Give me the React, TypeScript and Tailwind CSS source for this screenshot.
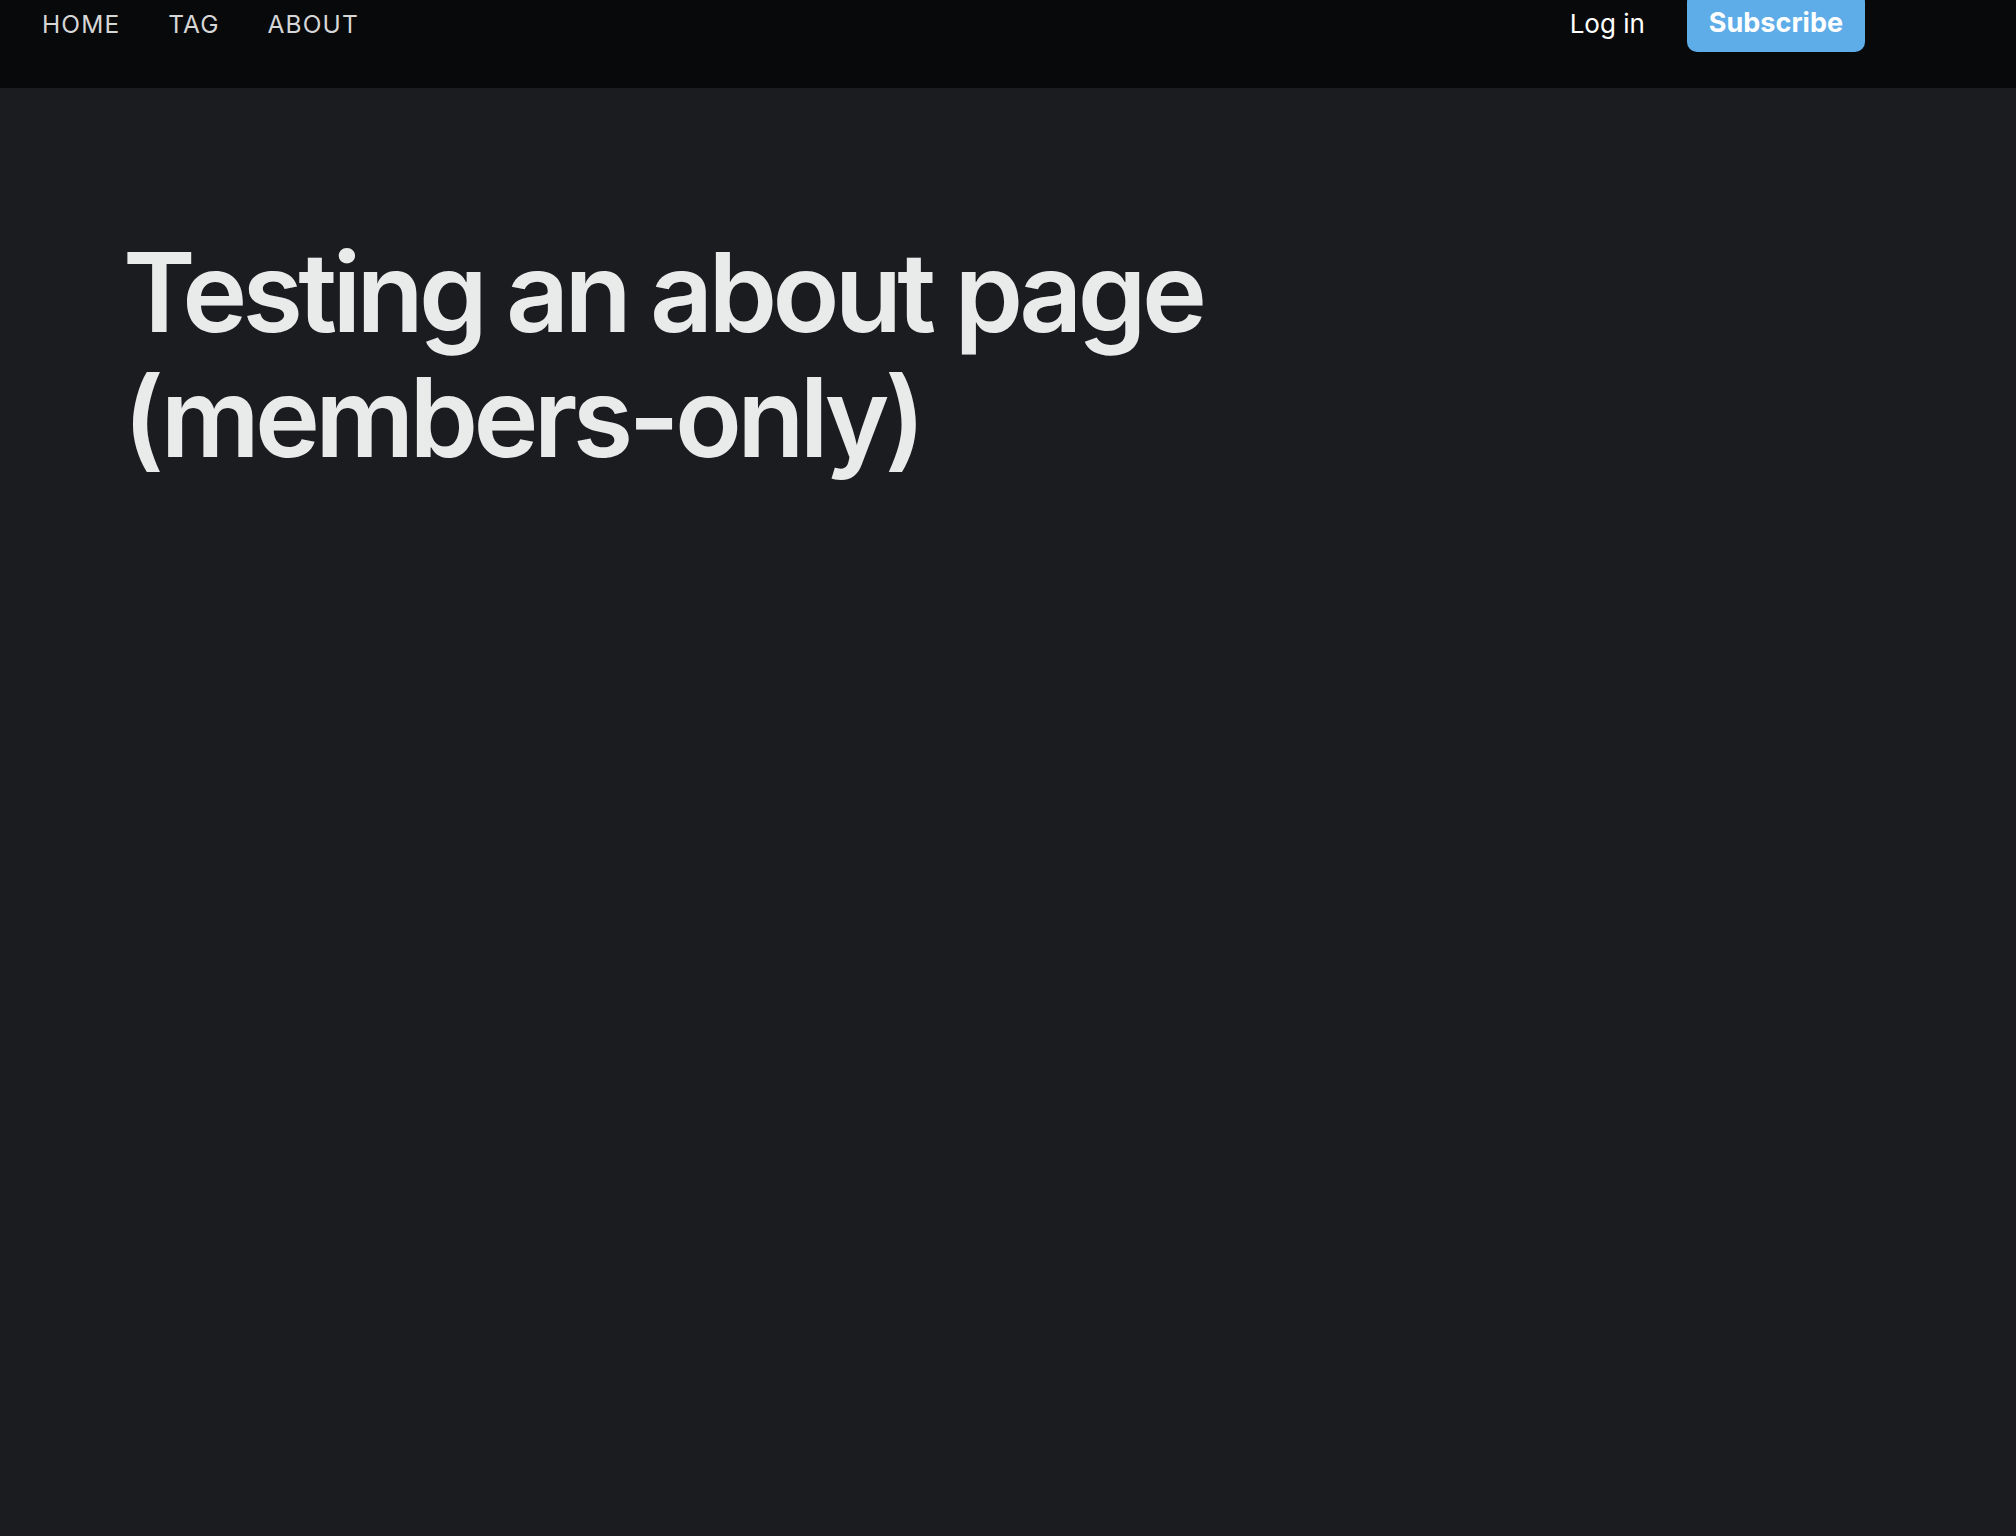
export default function App() {
    const font = { fontFamily: 'Inter, "Noto Sans", sans-serif' };

    return (
        <div className="min-h-screen w-full bg-[#1b1c20]" style={font}>
            <header className="flex h-[88px] w-full flex-col bg-[#08090b]">
                <div className="-mt-[8px] flex h-[60px] items-center justify-between pl-[42px] pr-[151px]">
                    <nav className="mt-[5px] flex items-center gap-[48px] text-[24.5px] uppercase tracking-[0.045em] text-[#d6d6d6]">
                        <a href="#">Home</a>
                        <a href="#">Tag</a>
                        <a href="#">About</a>
                    </nav>
                    <div className="flex items-center gap-[42px]">
                        <a href="#" className="mt-[3px] text-[26px] text-white">
                            Log in
                        </a>
                        <button className="h-[60px] rounded-[10px] bg-[#5eade8] px-[22px] pt-[3px] text-[27px] font-bold text-white">
                            Subscribe
                        </button>
                    </div>
                </div>
            </header>
            <main className="px-[123px] pt-[142px]">
                <h1 className="max-w-[1200px] text-[110px] font-semibold leading-[125px] tracking-[-0.043em] text-[#e9eaea]">
                    Testing an about page (members-only)
                </h1>
            </main>
        </div>
    );
}
